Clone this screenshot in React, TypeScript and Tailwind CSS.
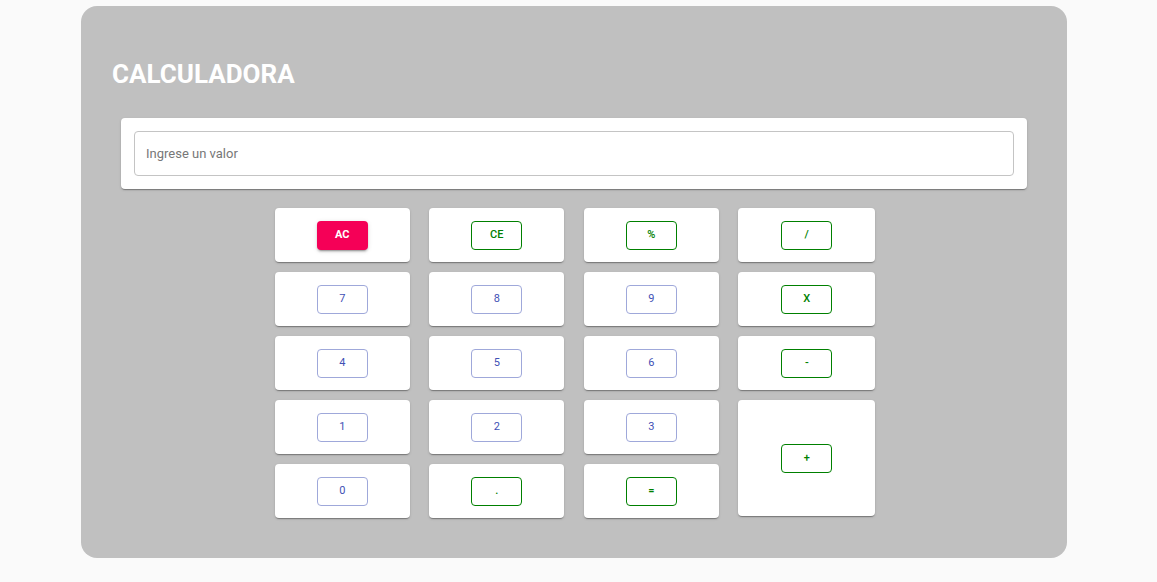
import React from 'react';

type Key = {
  label: string;
  kind: 'clear' | 'num' | 'op';
  tall?: boolean;
};

const KEYS: Key[] = [
  { label: 'AC', kind: 'clear' },
  { label: 'CE', kind: 'op' },
  { label: '%', kind: 'op' },
  { label: '/', kind: 'op' },
  { label: '7', kind: 'num' },
  { label: '8', kind: 'num' },
  { label: '9', kind: 'num' },
  { label: 'X', kind: 'op' },
  { label: '4', kind: 'num' },
  { label: '5', kind: 'num' },
  { label: '6', kind: 'num' },
  { label: '-', kind: 'op' },
  { label: '1', kind: 'num' },
  { label: '2', kind: 'num' },
  { label: '3', kind: 'num' },
  { label: '+', kind: 'op', tall: true },
  { label: '0', kind: 'num' },
  { label: '.', kind: 'op' },
  { label: '=', kind: 'op' },
];

const cardShadow =
  'shadow-[0_2px_1px_-1px_rgba(0,0,0,0.2),0_1px_1px_0_rgba(0,0,0,0.14),0_1px_3px_0_rgba(0,0,0,0.12)]';

const KeyButton = ({ k }: { k: Key }) => {
  const base =
    'w-[51px] h-[29px] rounded-[4px] text-[11px] flex items-center justify-center';
  const look =
    k.kind === 'clear'
      ? 'bg-[#f50057] text-white font-bold shadow-[0_3px_1px_-2px_rgba(0,0,0,0.2),0_2px_2px_0_rgba(0,0,0,0.14),0_1px_5px_0_rgba(0,0,0,0.12)]'
      : k.kind === 'num'
        ? 'border border-[#9fa8da] text-[#3f51b5] bg-white font-normal'
        : 'border border-[#008000] text-[#008000] bg-white font-medium';

  return <button className={`${base} ${look}`}>{k.label}</button>;
};

const App = () => {
  return (
    <div
      className="w-full h-[582px] bg-[#fafafa] pt-[6px]"
      style={{ fontFamily: 'Roboto, "Liberation Sans", sans-serif' }}
    >
      <div className="ml-[81px] w-[986px] h-[552px] bg-[#c0c0c0] rounded-[16px] pt-[52px]">
        {/* titulo */}
        <h1 className="pl-[31px] text-[26px] leading-[32px] font-bold text-white">
          CALCULADORA
        </h1>

        {/* input */}
        <div className={`mx-[40px] mt-[28px] bg-white rounded-[4px] p-[13px] ${cardShadow}`}>
          <input
            className="w-full h-[45px] border border-[#c4c4c4] rounded-[4px] px-[11px] text-[13px] text-[#333] placeholder:text-[#777] outline-none"
            placeholder="Ingrese un valor"
          />
        </div>

        {/* teclado */}
        <div className="mt-[19px] flex justify-center pl-[2px]">
          <div className="grid grid-cols-[135px_135px_135px_137px] auto-rows-[54px] gap-x-[19.5px] gap-y-[10px]">
            {KEYS.map((k) => (
              <div
                key={k.label}
                className={`bg-white rounded-[4px] flex items-center justify-center ${cardShadow} ${
                  k.tall ? 'row-span-2 h-[116px]' : ''
                }`}
              >
                <KeyButton k={k} />
              </div>
            ))}
          </div>
        </div>
      </div>
    </div>
  );
};

export default App;
